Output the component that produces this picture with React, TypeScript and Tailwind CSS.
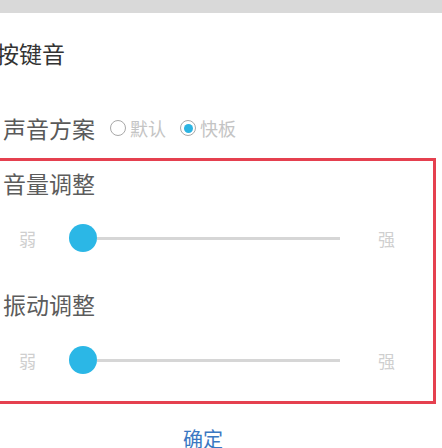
import React from "react";

const font = { fontFamily: '"Noto Sans CJK SC", "Noto Sans", sans-serif' };

const Radio = ({ checked, label }: { checked?: boolean; label: string }) => (
  <div className="flex items-center">
    <span className="w-[16px] h-[16px] rounded-full border-[1.5px] border-[#a8a8a8] flex items-center justify-center">
      {checked && <span className="w-[9px] h-[9px] rounded-full bg-[#2cb4e2]" />}
    </span>
    <span className="ml-[4px] text-[18px] leading-none text-[#c4c4c4]">{label}</span>
  </div>
);

const SliderRow = ({ height }: { height: string }) => (
  <div className={`flex items-center pl-[20px] ${height}`}>
    <span className="w-[17px] text-[17px] leading-none text-[#cfcfcf]">弱</span>
    <div className="ml-[33px] flex items-center">
      <span className="w-[28px] h-[28px] rounded-full bg-[#2bb7e6]" />
      <span className="w-[243px] h-[3px] bg-[#d6d6d6]" />
    </div>
    <span className="ml-[38px] text-[17px] leading-none text-[#cfcfcf]">强</span>
  </div>
);

export default function App() {
  return (
    <div className="w-[442px] h-[448px] overflow-hidden bg-white" style={font}>
      <div className="h-[13px] bg-[#d9d9d9]" />
      <div className="h-[80px] flex items-center -ml-[4px]">
        <span className="text-[23px] leading-none text-[#333333]">按键音</span>
      </div>
      <div className="h-[65px] pt-[5px] flex items-center pl-[3px]">
        <span className="text-[23px] leading-none text-[#595959]">声音方案</span>
        <div className="ml-[15px] flex items-center gap-[14px]">
          <Radio label="默认" />
          <Radio checked label="快板" />
        </div>
      </div>
      <div className="-ml-[4px] w-[440px] border-[3px] border-[#e5404f]">
        <div className="h-[44px] flex items-center pl-[4px]">
          <span className="text-[23px] leading-none text-[#5c5c5c]">音量调整</span>
        </div>
        <SliderRow height="h-[66px]" />
        <div className="h-[66px] flex items-center pl-[4px]">
          <span className="text-[23px] leading-none text-[#5c5c5c]">振动调整</span>
        </div>
        <SliderRow height="h-[46px]" />
        <div className="h-[18px]" />
      </div>
      <div className="h-[70px] flex items-center pl-[183px]">
        <span className="text-[20px] leading-none text-[#3a78c2]">确定</span>
      </div>
    </div>
  );
}
